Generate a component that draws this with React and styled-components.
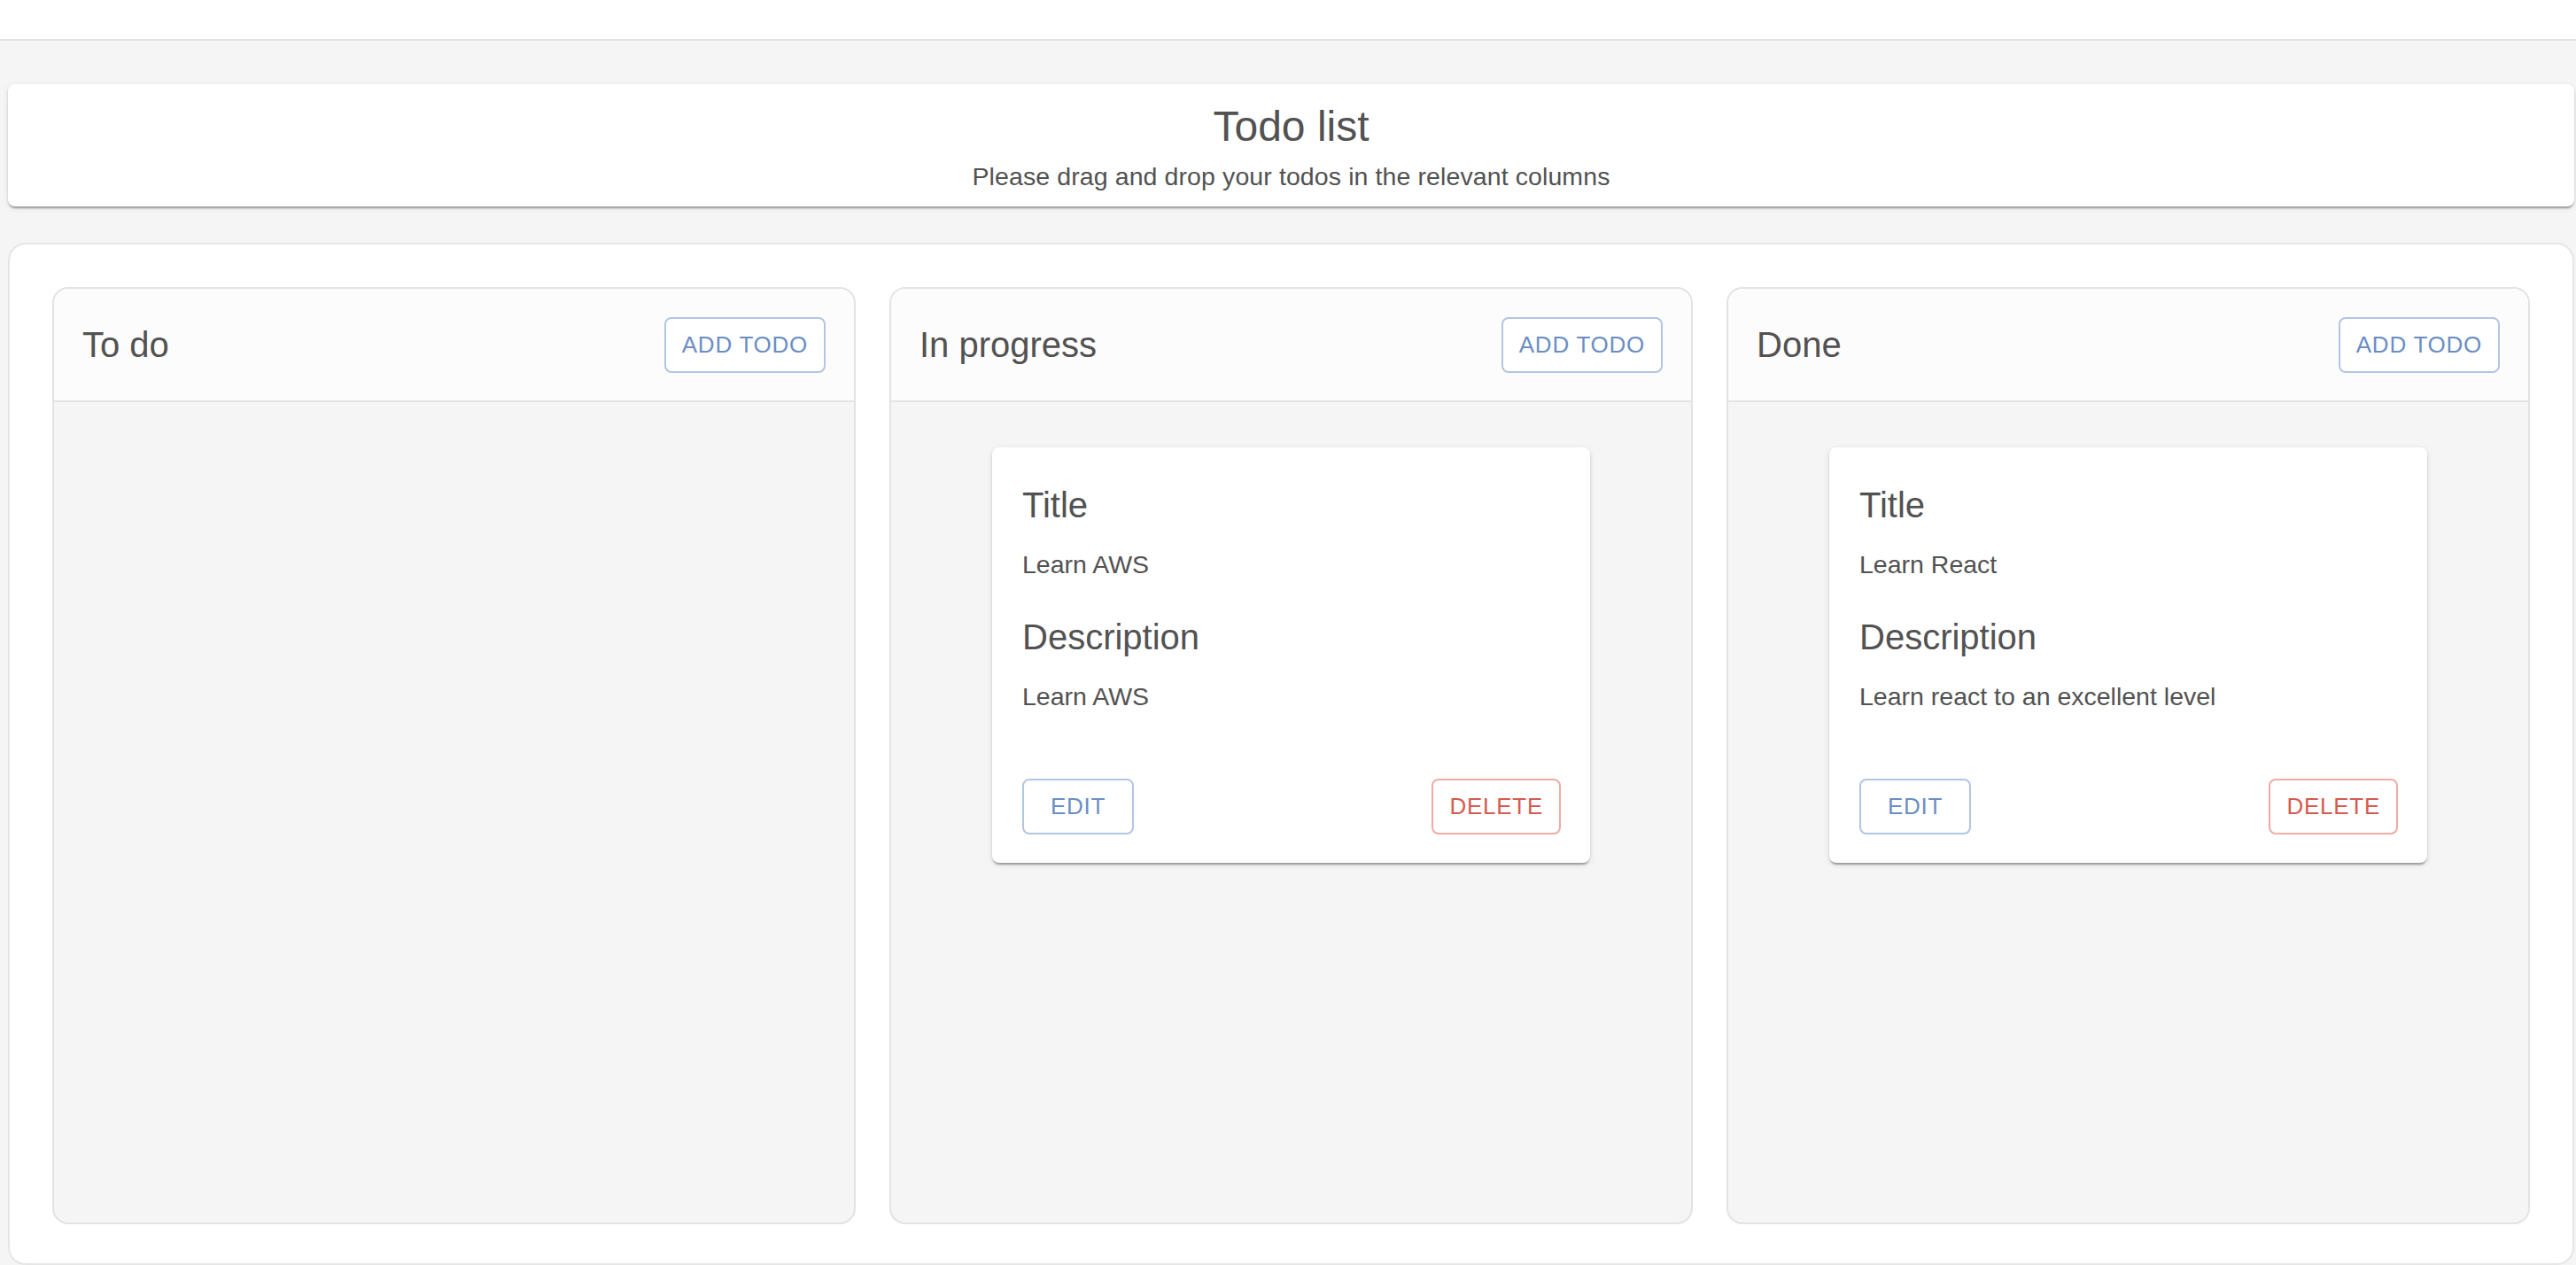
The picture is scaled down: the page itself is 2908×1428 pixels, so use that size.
import styled, { createGlobalStyle } from "styled-components";

const columns = [
  { name: "To do", todos: [] },
  {
    name: "In progress",
    todos: [{ title: "Learn AWS", description: "Learn AWS" }],
  },
  {
    name: "Done",
    todos: [
      { title: "Learn React", description: "Learn react to an excellent level" },
    ],
  },
];

function TodoCard({ todo }) {
  return (
    <Card>
      <CardHeading>Title</CardHeading>
      <CardText>{todo.title}</CardText>
      <CardHeading>Description</CardHeading>
      <CardText>{todo.description}</CardText>
      <CardActions>
        <OutlineButton $wide>EDIT</OutlineButton>
        <OutlineButton $danger>DELETE</OutlineButton>
      </CardActions>
    </Card>
  );
}

function App() {
  return (
    <>
      <GlobalStyle />
      <TopBar />
      <Page>
        <HeaderCard>
          <PageTitle>Todo list</PageTitle>
          <PageSubtitle>Please drag and drop your todos in the relevant columns</PageSubtitle>
        </HeaderCard>
        <Board>
          {columns.map((col) => (
            <Column key={col.name}>
              <ColumnHeader>
                <ColumnTitle>{col.name}</ColumnTitle>
                <OutlineButton>ADD TODO</OutlineButton>
              </ColumnHeader>
              <ColumnBody>
                {col.todos.map((todo) => (
                  <TodoCard key={todo.title} todo={todo} />
                ))}
              </ColumnBody>
            </Column>
          ))}
        </Board>
      </Page>
    </>
  );
}

const GlobalStyle = createGlobalStyle`
  body {
    margin: 0;
    background: #f5f5f5;
    font-family: "Liberation Sans", Arial, Helvetica, sans-serif;
    color: #525252;
  }
  * {
    box-sizing: border-box;
  }
`;

const TopBar = styled.header`
  height: 46px;
  background: #fff;
  border-bottom: 2px solid #e2e2e2;
`;

const Page = styled.main`
  padding: 49px 2px 0 9px;
`;

const HeaderCard = styled.section`
  background: #fff;
  border-radius: 8px;
  padding: 17px 16px 14px;
  text-align: center;
  box-shadow: 0 4px 2px -2px rgba(0, 0, 0, 0.2), 0 2px 2px 0 rgba(0, 0, 0, 0.14),
    0 2px 6px 0 rgba(0, 0, 0, 0.12);
  margin-bottom: 41px;
`;

const PageTitle = styled.h1`
  margin: 0 0 6px;
  font-size: 48px;
  font-weight: 400;
  line-height: 61px;
`;

const PageSubtitle = styled.p`
  margin: 0;
  font-size: 28.5px;
  line-height: 40px;
  letter-spacing: 0.1px;
`;

const Board = styled.section`
  display: grid;
  grid-template-columns: repeat(3, 1fr);
  gap: 38px;
  background: #fff;
  border: 2px solid #e6e6e6;
  border-radius: 20px;
  padding: 48px 48px 44px;
`;

const Column = styled.div`
  display: flex;
  flex-direction: column;
  height: 1058px;
  border: 2px solid #e3e3e3;
  border-radius: 18px;
  overflow: hidden;
  background: #f5f5f5;
`;

const ColumnHeader = styled.div`
  display: flex;
  align-items: center;
  justify-content: space-between;
  padding: 31px 32px;
  background: #fcfcfc;
  border-bottom: 2px solid #e3e3e3;
`;

const ColumnTitle = styled.h2`
  margin: 0;
  font-size: 40px;
  font-weight: 400;
  line-height: 64px;
`;

const ColumnBody = styled.div`
  flex: 1;
  display: flex;
  flex-direction: column;
  align-items: center;
  gap: 32px;
  padding-top: 51px;
`;

const Card = styled.article`
  width: 675px;
  background: #fff;
  border-radius: 8px;
  padding: 33px 33px 32px 34px;
  box-shadow: 0 4px 2px -2px rgba(0, 0, 0, 0.2), 0 2px 2px 0 rgba(0, 0, 0, 0.14),
    0 2px 6px 0 rgba(0, 0, 0, 0.12);
`;

const CardHeading = styled.h3`
  margin: 0 0 15px;
  font-size: 40px;
  font-weight: 400;
  line-height: 64px;
`;

const CardText = styled.p`
  margin: 0 0 30px;
  font-size: 28.5px;
  line-height: 40px;
`;

const CardActions = styled.div`
  display: flex;
  justify-content: space-between;
  margin-top: 73px;
`;

const OutlineButton = styled.button`
  min-width: ${(p) => (p.$wide ? "126px" : "64px")};
  padding: 7px 18px;
  font-family: inherit;
  font-size: 26px;
  line-height: 45px;
  letter-spacing: 0.74px;
  background: #fff;
  color: ${(p) => (p.$danger ? "#d45b4f" : "#6a8ec4")};
  border: 2px solid ${(p) => (p.$danger ? "#eeaca5" : "#b2c5e1")};
  border-radius: 8px;
  cursor: pointer;
`;

export default App;
